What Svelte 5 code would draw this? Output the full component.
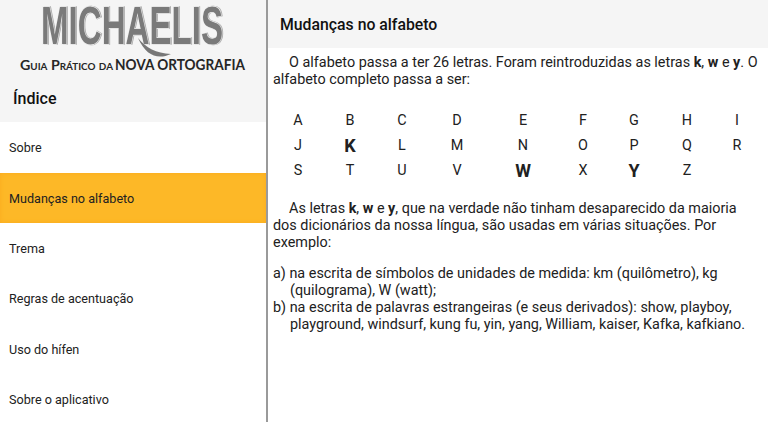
<script>
	const items = ['Sobre', 'Mudanças no alfabeto', 'Trema', 'Regras de acentuação', 'Uso do hífen', 'Sobre o aplicativo'];
	let active = $state(1);

	const letters = 'ABCDEFGHIJKLMNOPQRSTUVWXYZ'.split('');
	const bold = ['K', 'W', 'Y'];
</script>

<div class="page">
	<aside class="sidebar">
		<header class="side-head">
			<svg class="logo" viewBox="0 0 266 80" width="266" height="80" aria-label="Michaelis">
				<text class="logo-main" transform="translate(41 44) scale(0.77 1.26)">MICHAELIS</text>
				<path d="M138 38C146 48 156 53 171 54 158 60 146 56 138 38z" fill="#777" />
				<text class="tag-small" x="20" y="70" textLength="93" lengthAdjust="spacingAndGlyphs">Guia Prático da</text>
				<text class="tag" x="115" y="70" textLength="130" lengthAdjust="spacingAndGlyphs">NOVA ORTOGRAFIA</text>
			</svg>
			<h2>Índice</h2>
		</header>
		<nav>
			{#each items as item, i}
				<button class="item" class:active={i === active} onclick={() => (active = i)}>{item}</button>
			{/each}
		</nav>
	</aside>

	<main class="content">
		<h1>Mudanças no alfabeto</h1>
		<div class="body">
			<p class="indent">O alfabeto passa a ter 26 letras. Foram reintroduzidas as letras <b>k</b>, <b>w</b> e <b>y</b>. O alfabeto completo passa a ser:</p>
			<div class="alphabet">
				{#each letters as l}
					<span class:strong={bold.includes(l)}>{l}</span>
				{/each}
			</div>
			<p class="indent">As letras <b>k</b>, <b>w</b> e <b>y</b>, que na verdade não tinham desaparecido da maioria dos dicionários da nossa língua, são usadas em várias situações. Por exemplo:</p>
			<ul>
				<li><span>a)</span> na escrita de símbolos de unidades de medida: km (quilômetro), kg (quilograma), W (watt);</li>
				<li><span>b)</span> na escrita de palavras estrangeiras (e seus derivados): show, playboy, playground, windsurf, kung fu, yin, yang, William, kaiser, Kafka, kafkiano.</li>
			</ul>
		</div>
	</main>
</div>

<style>
	:global(body) {
		margin: 0;
		background: #fff;
	}

	.page {
		display: flex;
		width: 768px;
		height: 422px;
		overflow: hidden;
		font-family: Roboto, "Liberation Sans", sans-serif;
		color: #212121;
	}

	.sidebar {
		width: 266px;
		flex: none;
		border-right: 2px solid #9a9a9a;
	}

	.side-head {
		height: 122px;
		background: #f5f5f5;
		overflow: hidden;
	}

	.logo {
		display: block;
	}

	.logo-main {
		font-family: "Liberation Sans", sans-serif;
		font-size: 43px;
		font-weight: 700;
		fill: #7a7a7a;
		stroke: #f5f5f5;
		stroke-width: 1;
		paint-order: stroke;
		filter: drop-shadow(1.5px 0.5px 0 #9a9a9a);
	}

	.tag,
	.tag-small {
		font-family: Lato, sans-serif;
		font-weight: 700;
		fill: #262626;
	}

	.tag {
		font-size: 15px;
	}

	.tag-small {
		font-size: 13px;
		font-variant: small-caps;
	}

	h2 {
		margin: 8px 0 0 13px;
		font-size: 16px;
		line-height: 22px;
		font-weight: 500;
		color: #111;
	}

	nav {
		display: flex;
		flex-direction: column;
		padding-top: 0.6px;
	}

	.item {
		height: 50.4px;
		flex: none;
		padding: 0 0 0 9px;
		border: 0;
		background: none;
		text-align: left;
		font: 12.6px Roboto, sans-serif;
		color: #212121;
	}

	.item.active {
		background: #fdb827;
		box-shadow: inset 0 0 5px #fbab1e;
	}

	.content {
		flex: 1;
		min-width: 0;
	}

	h1 {
		margin: 0;
		height: 48px;
		padding-left: 12px;
		background: #f5f5f5;
		font-size: 15.8px;
		line-height: 49px;
		font-weight: 500;
		color: #111;
	}

	.body {
		padding: 6px 8px 0 5px;
		font-size: 14.4px;
		line-height: 17px;
	}

	p {
		margin: 0;
	}

	.indent {
		text-indent: 16px;
	}

	.alphabet {
		display: grid;
		grid-template-columns: 52px 52px 52px 58px 74px 46px 56px 50px 50px;
		grid-auto-rows: 25px;
		align-items: center;
		justify-items: center;
		margin: 20px 0 17px -1px;
	}

	.alphabet .strong {
		font-size: 18px;
		font-weight: 700;
	}

	ul {
		list-style: none;
		margin: 14px 0 0;
		padding: 0 0 0 17px;
	}

	li {
		text-indent: -17px;
	}
</style>
